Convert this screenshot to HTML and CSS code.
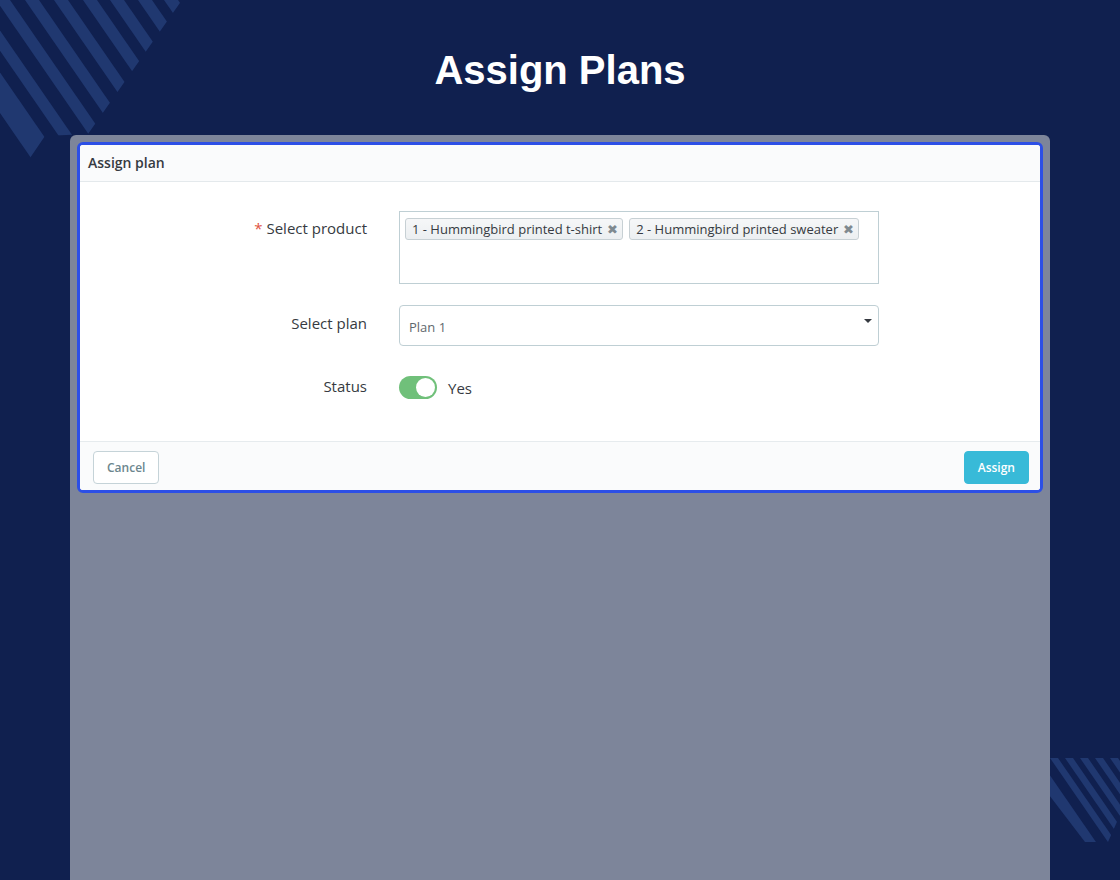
FILE: index.html
```html
<!DOCTYPE html>
<html lang="en">
<head>
<meta charset="utf-8">
<title>Assign Plans</title>
<link rel="stylesheet" href="styles.css">
</head>
<body>
<svg class="deco deco-tl" width="200" height="170" viewBox="0 0 200 170" aria-hidden="true">
  <defs>
    <clipPath id="clipTl"><polygon points="0,0 182,0 88,134 45,136 30,158 0,114"/></clipPath>
  </defs>
  <g clip-path="url(#clipTl)" fill="#203870">
    <g transform="skewX(34.6)">
      <rect x="-78" y="-10" width="28" height="200"/>
      <rect x="-35" y="-10" width="14" height="200"/>
      <rect x="-4" y="-10" width="14" height="200"/>
      <rect x="25" y="-10" width="14" height="200"/>
      <rect x="54" y="-10" width="14" height="200"/>
      <rect x="83" y="-10" width="14" height="200"/>
      <rect x="110" y="-10" width="14" height="200"/>
      <rect x="138" y="-10" width="14" height="200"/>
      <rect x="164" y="-10" width="14" height="200"/>
      <rect x="192" y="-10" width="14" height="200"/>
    </g>
  </g>
</svg>
<svg class="deco deco-br" width="90" height="100" viewBox="1030 750 90 100" aria-hidden="true">
  <defs>
    <clipPath id="clipBr"><polygon points="1030,758 1120,758 1120,815 1108,842 1085,842 1030,770"/></clipPath>
  </defs>
  <g clip-path="url(#clipBr)" fill="#203870">
    <g transform="translate(0 758) skewX(34.6)">
      <rect x="1021" y="-10" width="17" height="120"/>
      <rect x="1050" y="-10" width="8" height="120"/>
      <rect x="1065" y="-10" width="8" height="120"/>
      <rect x="1080" y="-10" width="8" height="120"/>
      <rect x="1095" y="-10" width="8" height="120"/>
      <rect x="1110" y="-10" width="8" height="120"/>
    </g>
  </g>
</svg>

<header class="hero">
  <h1 class="hero-title">Assign Plans</h1>
</header>

<main class="stage">
  <section class="modal">
    <div class="modal-header">Assign plan</div>
    <div class="modal-body">
      <div class="form-row row-product">
        <label class="form-label"><span class="required">*</span> Select product</label>
        <div class="tag-box">
          <span class="tag">1 - Hummingbird printed t-shirt <span class="tag-x">&#10006;</span></span>
          <span class="tag">2 - Hummingbird printed sweater <span class="tag-x">&#10006;</span></span>
        </div>
      </div>
      <div class="form-row row-plan">
        <label class="form-label">Select plan</label>
        <div class="select-box">
          <span class="select-value">Plan 1</span>
          <span class="select-caret"></span>
        </div>
      </div>
      <div class="form-row row-status">
        <label class="form-label">Status</label>
        <div class="switch-wrap">
          <span class="switch"><span class="switch-knob"></span></span>
          <span class="switch-text">Yes</span>
        </div>
      </div>
    </div>
    <div class="modal-footer">
      <button class="btn btn-cancel" type="button">Cancel</button>
      <button class="btn btn-assign" type="button">Assign</button>
    </div>
  </section>
</main>
</body>
</html>
```
FILE: styles.css
```css
* { box-sizing: border-box; }

html, body {
  margin: 0;
  padding: 0;
}

body {
  position: relative;
  height: 880px;
  overflow: hidden;
  background: #10204f;
  font-family: "Open Sans", "Noto Sans", sans-serif;
  color: #363a41;
}

.deco {
  position: absolute;
  display: block;
}
.deco-tl { left: 0; top: 0; }
.deco-br { left: 1030px; top: 750px; }

.hero {
  position: relative;
  height: 135px;
  padding-top: 4px;
  display: flex;
  align-items: center;
  justify-content: center;
}

.hero-title {
  margin: 0;
  font-family: "Liberation Sans", Arial, sans-serif;
  font-weight: 700;
  font-size: 40px;
  line-height: 48px;
  color: #ffffff;
}

.stage {
  position: relative;
  z-index: 1;
  margin: 0 70px;
  height: 745px;
  padding: 7px;
  background: #7d859a;
  border-radius: 6px 6px 0 0;
}

.modal {
  background: #ffffff;
  border: 3px solid #2c4fe6;
  border-radius: 6px;
  overflow: hidden;
}

.modal-header {
  height: 37px;
  padding: 0 8px 1px;
  display: flex;
  align-items: center;
  background: #fafbfc;
  border-bottom: 1px solid #e4e9ec;
  font-size: 14px;
  font-weight: 600;
  color: #363a41;
}

.modal-body {
  height: 259px;
  padding-top: 29px;
}

.form-row {
  display: grid;
  grid-template-columns: 287px 480px;
  column-gap: 32px;
  align-items: start;
}

.form-label {
  text-align: right;
  font-size: 15px;
  line-height: 20px;
  color: #363a41;
}

.required {
  color: #e0523f;
}

.row-product .form-label { padding-top: 7px; }
.row-plan { margin-top: 21px; }
.row-plan .form-label { padding-top: 8px; }
.row-status { margin-top: 30px; }
.row-status .form-label { padding-top: 0; }

.tag-box {
  height: 73px;
  border: 1px solid #bfcfd4;
  padding: 6px 5px;
  display: flex;
  align-items: flex-start;
  gap: 6px;
}

.tag {
  display: inline-flex;
  align-items: center;
  height: 22px;
  padding: 0 4px 0 6px;
  background: linear-gradient(#f6f7f8, #eceff1);
  border: 1px solid #c7d0d4;
  border-radius: 3px;
  font-size: 13px;
  color: #363a41;
  white-space: nowrap;
}

.tag-x {
  margin-left: 5px;
  font-size: 13px;
  color: #7f8a90;
  line-height: 1;
}

.select-box {
  position: relative;
  height: 41px;
  border: 1px solid #bfcfd4;
  border-radius: 4px;
  padding: 0 9px;
  display: flex;
  align-items: center;
}

.select-value {
  padding-top: 3px;
  font-size: 13px;
  color: #5f686e;
}

.select-caret {
  position: absolute;
  right: 6px;
  top: 13px;
  width: 0;
  height: 0;
  border-left: 4px solid transparent;
  border-right: 4px solid transparent;
  border-top: 4px solid #363a41;
}

.switch-wrap {
  display: flex;
  align-items: center;
  gap: 11px;
}

.switch {
  position: relative;
  width: 38px;
  height: 23px;
  border-radius: 12px;
  background: #70c07a;
}

.switch-knob {
  position: absolute;
  right: 2px;
  top: 2px;
  width: 19px;
  height: 19px;
  border-radius: 50%;
  background: #ffffff;
}

.switch-text {
  font-size: 15px;
  color: #363a41;
  padding-top: 1px;
}

.modal-footer {
  height: 49px;
  padding: 9px 11px 7px 13px;
  display: flex;
  justify-content: space-between;
  align-items: flex-start;
  background: #fafbfc;
  border-top: 1px solid #e6ebee;
}

.btn {
  height: 33px;
  padding: 0 13px;
  border-radius: 4px;
  font-family: "Open Sans", "Noto Sans", sans-serif;
  font-size: 12px;
  font-weight: 600;
  cursor: pointer;
}

.btn-cancel {
  background: #ffffff;
  border: 1px solid #c5d3d8;
  color: #6c868e;
}

.btn-assign {
  background: #38bad8;
  border: 1px solid #38bad8;
  color: #ffffff;
}
```
